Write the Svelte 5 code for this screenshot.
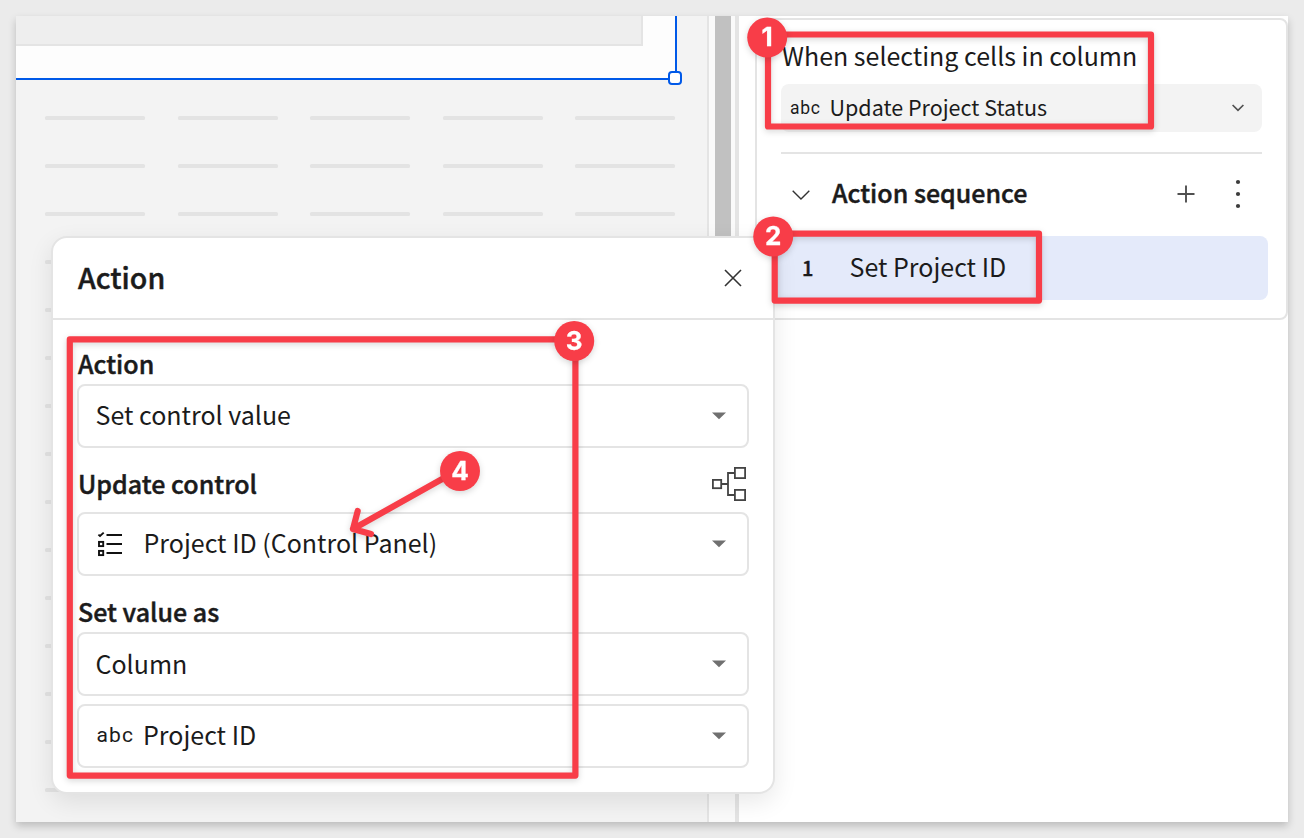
<script>
  const columns = [0, 1, 2, 3, 4];
  const rows = Array.from({ length: 15 }, (_, i) => i);
  const badges = [
    { n: 1, x: 767.2, y: 37.6 },
    { n: 2, x: 773.2, y: 236.4 },
    { n: 3, x: 574.2, y: 341 },
    { n: 4, x: 460, y: 471 }
  ];
</script>

{#snippet caret()}
  <svg class="caret" width="14" height="8" viewBox="0 0 14 8"><path d="M0 .6H14L7 7.2Z" fill="#707070" /></svg>
{/snippet}

<div class="page">
  <div class="window">
    <div class="canvas">
      <div class="element"><div class="inner"></div><i class="handle"></i></div>
      <div class="lines">
        {#each rows as r (r)}
          {#each columns as c (c)}<span></span>{/each}
        {/each}
      </div>
    </div>
    <div class="track"><div class="thumb"></div></div>
    <aside>
      <section class="card">
        <div class="prompt">When selecting cells in column</div>
        <div class="picker">
          <span class="abc small">abc</span>
          <span class="text">Update Project Status</span>
          <svg class="end" width="14" height="10" viewBox="0 0 14 10"><path d="M1.6 2 7 7.3 12.4 2" fill="none" stroke="#505050" stroke-width="1.7" /></svg>
        </div>
        <hr />
        <div class="seq">
          <svg class="fold" width="18" height="12" viewBox="0 0 18 12"><path d="M.7 1.7 9 9.9 17.3 1.7" fill="none" stroke="#333" stroke-width="1.4" /></svg>
          <b>Action sequence</b>
          <svg class="plus" width="18" height="18" viewBox="0 0 18 18"><path d="M.5 9H17.5M9 .5V17.5" stroke="#505050" stroke-width="1.9" /></svg>
          <svg width="6" height="30" viewBox="0 0 6 30" fill="#3c3c3c"><circle cx="3" cy="3" r="2.1" /><circle cx="3" cy="15" r="2.1" /><circle cx="3" cy="27" r="2.1" /></svg>
        </div>
        <div class="step"><b>1</b><span class="text">Set Project ID</span></div>
      </section>
    </aside>
  </div>

  <div class="modal">
    <header>
      <b>Action</b>
      <svg width="18" height="18" viewBox="0 0 18 18"><path d="M1 1 17 17M17 1 1 17" stroke="#333" stroke-width="1.6" /></svg>
    </header>
    <div class="body">
      <div class="label"><b>Action</b></div>
      <div class="select"><span class="text">Set control value</span>{@render caret()}</div>
      <div class="label tree">
        <b>Update control</b>
        <svg width="34" height="34" viewBox="0 0 34 34" fill="none" stroke="#444" stroke-width="1.8">
          <rect x=".9" y="12.9" width="8.3" height="8.3" /><rect x="22.9" y=".9" width="10.2" height="10.2" /><rect x="22.9" y="22.9" width="10.2" height="10.2" />
          <path d="M9.2 17H16M22.9 6H16V28H22.9" />
        </svg>
      </div>
      <div class="select">
        <svg class="list" width="26" height="26" viewBox="0 0 26 26" fill="none" stroke="#111" stroke-width="1.9">
          <path d="M9.5 4H25M9.5 13H25M9.5 22H25" /><path d="M1.4 3.6 3 5 6.7 1.6" />
          <rect x="2" y="10.9" width="4.2" height="4.2" /><rect x="2" y="19.9" width="4.2" height="4.2" />
        </svg>
        <span class="text">Project ID (Control Panel)</span>{@render caret()}
      </div>
      <div class="label third"><b>Set value as</b></div>
      <div class="select column"><span class="text">Column</span>{@render caret()}</div>
      <div class="select last"><span class="abc">abc</span><span class="text">Project ID</span>{@render caret()}</div>
    </div>
  </div>

  <svg class="notes" width="1304" height="838" viewBox="0 0 1304 838">
    <g class="shade" fill="none" stroke="#f83d48" stroke-width="6.2" stroke-linejoin="round">
      <rect x="768" y="34.5" width="383" height="92" />
      <rect x="774.7" y="233.6" width="264.3" height="67" />
      <rect x="69.8" y="339.4" width="505.6" height="436.2" />
      <path d="M452 473.5 353 529M357.7 511 353 529 371 534" stroke-linecap="round" />
    </g>
    {#each badges as b (b.n)}
      <g class="shade">
        <circle cx={b.x} cy={b.y} r="20" fill="#f83d48" />
        <text x={b.x} y={b.y + 8.7} text-anchor="middle">{b.n}</text>
      </g>
    {/each}
  </svg>
</div>

<style>
  :global(body) { background: #ebebeb; }
  .page { position: relative; width: 1304px; height: 838px; padding: 16px; box-sizing: border-box; overflow: hidden; background: #ebebeb; font: 25px/36px "Noto Sans CJK SC", "Noto Sans", sans-serif; color: #1b1b1b; white-space: nowrap; }
  b { font-weight: 500; -webkit-text-stroke: .45px #1b1b1b; }
  svg { display: block; flex: none; }
  .window { display: flex; height: 806px; overflow: hidden; background: #fff; box-shadow: 0 4px 8px rgba(0,0,0,.2); }
  .canvas { width: 691px; background: #f3f3f3; border-right: 2px solid #e4e4e4; overflow: hidden; }
  .element { position: relative; width: 659px; height: 62px; background: #fdfdfd; border: solid #0059e8; border-width: 0 2px 2px 0; }
  .inner { width: 625px; height: 28px; background: #eee; border: solid #e4e4e4; border-width: 0 2px 2px 0; }
  .handle { position: absolute; right: -7px; bottom: -7px; width: 10px; height: 10px; border: 2px solid #0059e8; border-radius: 4px; background: #fff; }
  .lines { display: grid; grid-template-columns: repeat(5, 100px); column-gap: 32.5px; row-gap: 44px; padding: 36px 0 0 29px; }
  .lines span { height: 4px; background: #e3e3e3; border-radius: 1.5px; }
  .track { width: 26px; padding: 0 4px 0 6px; box-sizing: border-box; background: #fafafa; }
  .thumb { height: 400px; background: #c1c1c1; }
  aside { flex: 1; border-left: 2px solid #e4e4e4; box-shadow: inset 2px 0 #e4e4e4; padding: 2px 0 0 18px; }
  .card { height: 302px; box-sizing: border-box; border: 2px solid #e4e4e4; border-radius: 8px; background: #fff; padding: 0 24px; }
  .prompt { height: 64px; padding: 17px 0 0 1px; box-sizing: border-box; }
  .text { padding-bottom: 4px; }
  .column .text { padding-bottom: 3px; }
  .picker { display: flex; align-items: center; height: 48px; background: #f3f3f3; border-radius: 8px; padding: 0 17px 0 9px; font-size: 21.5px; }
  .picker .text { padding-bottom: 2px; }
  .abc { font: 21px/30px Roboto, sans-serif; letter-spacing: 1.1px; width: 46.5px; margin-left: 1px; }
  .abc.small { font-size: 17.5px; width: 39.5px; letter-spacing: .7px; margin: 0; padding-bottom: 1px; }
  .end { margin-left: auto; }
  hr { border: 0; height: 2px; background: #e4e4e4; margin: 20px 0 0; }
  .seq { display: flex; align-items: center; height: 82px; padding: 0 21px 2px 11px; box-sizing: border-box; }
  .seq b { margin-left: 22px; padding-bottom: 4px; }
  .fold { margin-top: 2px; }
  .plus { margin: 0 40px 0 auto; }
  .step { display: flex; align-items: center; height: 64px; margin: 0 -6px; padding-left: 27px; background: #e4eafa; border-radius: 8px; }
  .step b { width: 47.5px; font-size: 20px; }
  .modal { position: absolute; left: 51px; top: 236px; width: 724px; height: 558px; box-sizing: border-box; border: 2px solid #e4e4e4; border-radius: 16px; background: #fff; box-shadow: 0 8px 24px rgba(0,0,0,.09); }
  header { display: flex; align-items: center; justify-content: space-between; height: 82px; box-sizing: border-box; padding: 0 31px 0 25px; border-bottom: 2px solid #e4e4e4; font-size: 28.6px; }
  header b { padding-bottom: 2px; }
  .body { padding: 24px 24px 0; }
  .label { display: flex; align-items: center; height: 40px; padding-left: 1px; }
  .label b { padding-bottom: 2px; }
  .label.tree { margin: 12px 0 4px; height: 48px; justify-content: space-between; padding-right: 3px; }
  .label.third { margin-top: 16px; }
  .select { display: flex; align-items: center; height: 64px; box-sizing: border-box; border: 2px solid #e4e4e4; border-radius: 8px; padding: 0 21px 0 16.5px; }
  .select.last { margin-top: 8px; }
  .list { margin: 0 20.5px 0 1.5px; }
  .select .abc { padding-bottom: 2px; }
  .caret { margin-left: auto; }
  .notes { position: absolute; left: 0; top: 0; }
  .notes text { font: 700 26px Inter, sans-serif; fill: #fff; stroke: #fff; stroke-width: .3px; }
  .shade { filter: drop-shadow(0 2px 3px rgba(0,0,0,.16)); }
</style>
